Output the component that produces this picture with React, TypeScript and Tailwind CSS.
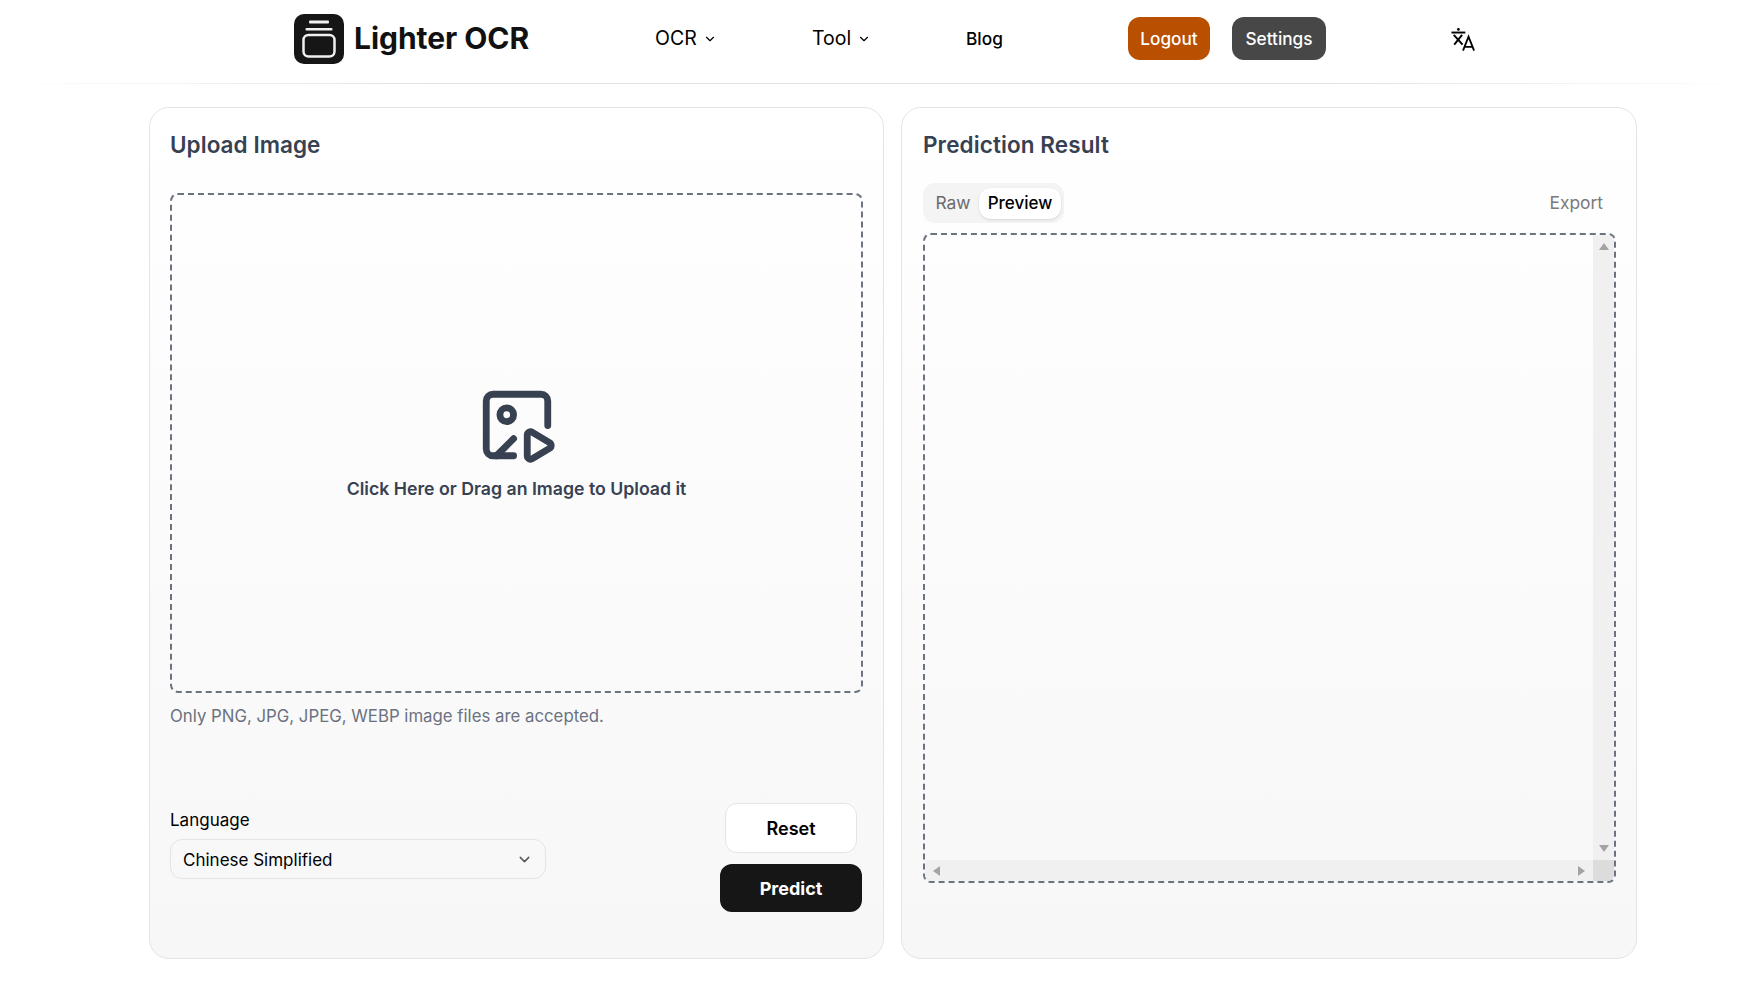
import React from "react";
import { ChevronDown, ImagePlay } from "lucide-react";

const font = { fontFamily: "Inter, 'Liberation Sans', sans-serif" };

function Logo() {
  return (
    <svg width="50" height="50" viewBox="0 0 50 50" className="shrink-0">
      <rect x="0" y="0" width="50" height="50" rx="10" fill="#161616" />
      <rect x="15" y="6.5" width="20" height="3" rx="1" fill="#f0f0f0" />
      <rect x="11.5" y="14" width="27" height="2.5" rx="1" fill="#f0f0f0" />
      <rect x="9.5" y="21" width="31" height="21.5" rx="5" fill="none" stroke="#f0f0f0" strokeWidth="2.5" />
    </svg>
  );
}

function TranslateIcon() {
  return (
    <svg width="24" height="24" viewBox="0 0 26 26" fill="none" stroke="#000" strokeWidth="2.1">
      <circle cx="8" cy="2.6" r="1.5" fill="#000" stroke="none" />
      <path d="M0.5 6H15.5" />
      <path d="M3 8.5L12.5 19" />
      <path d="M12 8.5L3.5 19" />
      <path d="M13 25.5L19 10.5L25 25.5M15 21.5H23" strokeWidth="2" />
    </svg>
  );
}

function Arrow({ dir }: { dir: "up" | "down" | "left" | "right" }) {
  const pts = {
    up: "0,7 5,0 10,7",
    down: "0,0 5,7 10,0",
    left: "7,0 0,5 7,10",
    right: "0,0 7,5 0,10",
  }[dir];
  const size = dir === "up" || dir === "down" ? "w-[10px] h-[7px]" : "w-[7px] h-[10px]";
  const box = dir === "up" || dir === "down" ? "0 0 10 7" : "0 0 7 10";
  return (
    <svg viewBox={box} className={size}>
      <polygon points={pts} fill="#a3a3a3" />
    </svg>
  );
}

export default function App() {
  return (
    <div className="h-screen w-full overflow-hidden bg-white text-black" style={font}>
      <header className="relative flex h-[84px] items-center pb-[7px] pl-[294px]">
        <div className="flex w-[361px] items-center">
          <Logo />
          <span className="ml-[10px] text-[30px] font-bold tracking-[-0.05px] text-[#111]">Lighter OCR</span>
        </div>
        <div className="flex w-[157px] items-center gap-[6px] pt-px text-[19.5px]">
          OCR <ChevronDown size={14} />
        </div>
        <div className="flex w-[154px] items-center gap-[6px] pt-px text-[19.5px]">
          Tool <ChevronDown size={14} />
        </div>
        <div className="w-[162px] pt-px text-[17.3px] font-medium">Blog</div>
        <div className="flex h-[43px] w-[82px] items-center justify-center rounded-xl bg-[#b94f00] pt-px text-[17.2px] font-medium text-white">
          Logout
        </div>
        <div className="ml-[22px] flex h-[43px] w-[94px] items-center justify-center rounded-xl bg-[#474747] pt-px text-[17.2px] font-medium text-white">
          Settings
        </div>
        <div className="ml-[125px]">
          <TranslateIcon />
        </div>
        <div className="absolute bottom-0 left-0 h-px w-full bg-[linear-gradient(to_right,#fff,#e2e2e2_25%,#e2e2e2_75%,#fff)]" />
      </header>

      <main className="flex gap-[17px] pl-[149px] pt-[23px]">
        <section className="flex h-[852px] w-[735px] flex-col rounded-[20px] border border-[#e4e4e4] bg-gradient-to-b from-white to-[#f7f7f7] px-[20px] pt-[23px]">
          <h2 className="h-[28px] text-[22.5px] font-semibold leading-[28px] tracking-[0.05px] text-[#374151]">Upload Image</h2>
          <div className="mt-[34px] flex h-[500px] w-[693px] flex-col items-center justify-center rounded-lg border-2 border-dashed border-[#6b7280]">
            <ImagePlay size={82} strokeWidth={2} className="text-[#374151]" />
            <p className="mt-[10px] text-[17.7px] font-semibold text-[#374151]">Click Here or Drag an Image to Upload it</p>
          </div>
          <p className="mt-[11px] text-[16.8px] leading-[24px] text-[#6b7280]">Only PNG, JPG, JPEG, WEBP image files are accepted.</p>
          <div className="mt-[75px] mr-[1px] flex items-start justify-between">
            <div className="w-[376px] pt-[5px]">
              <div className="text-[17px] leading-[24px]">Language</div>
              <div className="mt-[7px] flex h-[40px] items-center justify-between rounded-xl border border-[#e4e4e4] pl-[12px] pr-[12px] text-[17px]">
                <span className="pt-[3px]">Chinese Simplified</span>
                <ChevronDown size={17} className="text-[#555]" />
              </div>
            </div>
            <div className="flex w-[142px] flex-col items-center">
              <div className="flex h-[50px] w-[132px] items-center justify-center rounded-xl border border-[#e4e4e4] bg-white pt-px text-[18px] font-semibold">Reset</div>
              <div className="mt-[11px] flex h-[48px] w-[142px] items-center justify-center rounded-xl bg-[#161616] text-[18px] font-bold text-white">Predict</div>
            </div>
          </div>
        </section>

        <section className="flex h-[852px] w-[736px] flex-col rounded-[20px] border border-[#e4e4e4] bg-gradient-to-b from-white to-[#f7f7f7] px-[21px] pt-[23px]">
          <h2 className="h-[28px] text-[22.5px] font-semibold leading-[28px] tracking-[0.1px] text-[#374151]">Prediction Result</h2>
          <div className="mt-[24px] flex h-[40px] items-center justify-between pr-[12px]">
            <div className="flex h-[40px] w-[141px] items-center rounded-xl bg-[#f4f4f4] pl-[4px]">
              <span className="w-[52px] pt-px text-center text-[17.4px] text-[#6b6b6b]">Raw</span>
              <span className="flex h-[31px] w-[82px] items-center justify-center rounded-xl bg-white pt-px text-[17px] font-medium shadow-sm">Preview</span>
            </div>
            <span className="pt-px text-[17.4px] text-[#7a7a7a]">Export</span>
          </div>
          <div className="mt-[10px] flex h-[650px] w-[693px] flex-col overflow-hidden rounded-lg border-2 border-dashed border-[#6b7280]">
            <div className="flex min-h-0 flex-1">
              <div className="flex-1" />
              <div className="flex w-[21px] flex-col items-center justify-between bg-[#f0f0f0] py-[8px]">
                <Arrow dir="up" />
                <Arrow dir="down" />
              </div>
            </div>
            <div className="flex h-[21px] shrink-0">
              <div className="flex flex-1 items-center justify-between bg-[#f0f0f0] px-[8px]">
                <Arrow dir="left" />
                <Arrow dir="right" />
              </div>
              <div className="w-[21px] bg-[#dcdcdc]" />
            </div>
          </div>
        </section>
      </main>
    </div>
  );
}
